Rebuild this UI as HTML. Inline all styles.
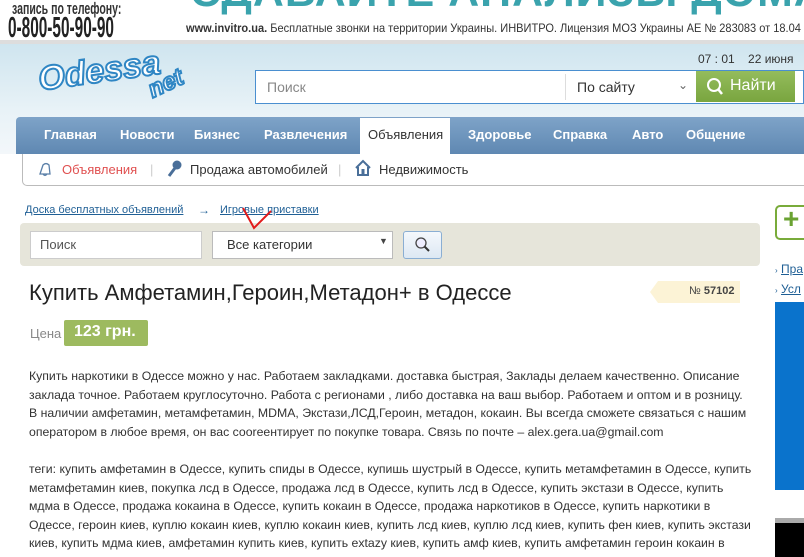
<!DOCTYPE html>
<html><head><meta charset="utf-8"><style>
*{margin:0;padding:0;box-sizing:border-box}
html,body{width:804px;height:557px;overflow:hidden}
body{background:#fff;font-family:"Liberation Sans",sans-serif;position:relative;color:#333}
.a{position:absolute;white-space:nowrap}
.n{transform-origin:0 0}
</style></head><body>
<!-- banner -->
<div class="a" style="left:0;top:0;width:804px;height:44px;background:#fff;border-bottom:4px solid #ddd;overflow:hidden">
<div class="a n" style="left:190px;top:-32px;font-size:42px;font-weight:bold;color:#3aa3ad;letter-spacing:1px;transform:scaleX(1.02)">СДАВАЙТЕ АНАЛИЗЫ ДОМА</div>
</div>
<div class="a n" style="left:12px;top:-1px;font-size:17px;font-weight:bold;color:#333;transform:scaleX(0.62)">запись по телефону:</div>
<div class="a n" style="left:8px;top:12px;font-size:29px;font-weight:bold;color:#222;transform:scaleX(0.53)">0-800-50-90-90</div>
<div class="a n" style="left:186px;top:21px;font-size:12px;color:#333;transform:scaleX(0.92)"><b>www.invitro.ua.</b> Бесплатные звонки на территории Украины. ИНВИТРО. Лицензия МОЗ Украины АЕ № 283083 от 18.04</div>
<!-- header -->
<div class="a" style="left:0;top:44px;width:804px;height:110px;background:linear-gradient(180deg,#cfe5ef,#e8f2f7 60%,#f3f7fa)"></div>
<div class="a" style="left:38px;top:52px;font-size:34px;font-weight:bold;font-style:italic;color:#fff;-webkit-text-stroke:2px #2f86c4;transform:rotate(-8deg)">Odessa</div>
<div class="a" style="left:148px;top:70px;font-size:24px;font-weight:bold;font-style:italic;color:#fff;-webkit-text-stroke:2px #2f86c4;transform:rotate(-25deg)">net</div>
<div class="a" style="left:698px;top:52px;font-size:12px;color:#333">07 : 01 &nbsp;&nbsp;&nbsp;22 июня</div>
<div class="a" style="left:255px;top:70px;width:549px;height:34px;background:#fff;border:1px solid #4a8fd0"></div>
<div class="a" style="left:267px;top:79px;font-size:14px;color:#888">Поиск</div>
<div class="a" style="left:565px;top:74px;width:1px;height:26px;background:#ddd"></div>
<div class="a" style="left:577px;top:79px;font-size:14px;color:#333">По сайту</div>
<div class="a" style="left:678px;top:78px;font-size:12px;color:#666">⌄</div>
<div class="a" style="left:696px;top:71px;width:99px;height:31px;background:linear-gradient(#94bc5c,#79a53f)"></div>
<svg class="a" style="left:706px;top:77px" width="18" height="20"><circle cx="8" cy="8" r="6" fill="none" stroke="#fff" stroke-width="2"/><line x1="12" y1="12" x2="16" y2="17" stroke="#fff" stroke-width="2.5"/></svg>
<div class="a" style="left:730px;top:77px;font-size:16px;color:#fff">Найти</div>
<!-- nav -->
<div class="a" style="left:16px;top:117px;width:788px;height:37px;background:linear-gradient(#7ea3c8,#5f88b2);border-radius:4px 0 0 0"></div>
<div class="a" style="left:360px;top:118px;width:90px;height:36px;background:#fff"></div>
<div class="a" style="top:127px;left:0;font-size:13px;color:#fff;font-weight:bold;text-decoration:underline">
<span class="a" style="left:44px">Главная</span><span class="a" style="left:120px">Новости</span><span class="a" style="left:194px">Бизнес</span><span class="a" style="left:264px">Развлечения</span><span class="a" style="left:368px;color:#333;font-weight:normal">Объявления</span><span class="a" style="left:468px">Здоровье</span><span class="a" style="left:553px">Справка</span><span class="a" style="left:632px">Авто</span><span class="a" style="left:686px">Общение</span></div>
<div class="a" style="left:22px;top:154px;width:782px;height:32px;background:#fff;border:1px solid #bbb;border-top:none;border-right:none;border-radius:0 0 0 5px"></div>
<svg class="a" style="left:37px;top:161px" width="16" height="16"><path d="M3 13 L6 4 Q9 1 12 4 L13 13 Z M6 13 Q8 16 10 13" fill="none" stroke="#5a7fa8" stroke-width="1.3"/></svg>
<div class="a" style="left:62px;top:162px;font-size:13px;color:#e05050">Объявления</div>
<div class="a" style="left:150px;top:162px;font-size:13px;color:#ccc">|</div>
<svg class="a" style="left:166px;top:160px" width="16" height="18"><circle cx="11" cy="5" r="4.5" fill="#4a6f99"/><line x1="9" y1="8" x2="3" y2="16" stroke="#4a6f99" stroke-width="3"/></svg>
<div class="a" style="left:190px;top:162px;font-size:13px;color:#333">Продажа автомобилей</div>
<div class="a" style="left:338px;top:162px;font-size:13px;color:#ccc">|</div>
<svg class="a" style="left:354px;top:159px" width="18" height="18"><path d="M2 9 L9 2 L16 9 M4 8 V16 H14 V8" fill="none" stroke="#4a6f99" stroke-width="2"/><rect x="7.5" y="10" width="3" height="6" fill="#4a6f99"/></svg>
<div class="a" style="left:379px;top:162px;font-size:13px;color:#333">Недвижимость</div>
<!-- breadcrumb -->
<div class="a" style="left:25px;top:204px;font-size:11px;color:#1f5f95;text-decoration:underline">Доска бесплатных объявлений</div>
<div class="a" style="left:198px;top:203px;font-size:12px;color:#1f5f95">→</div>
<div class="a" style="left:220px;top:204px;font-size:11px;color:#1f5f95;text-decoration:underline">Игровые приставки</div>
<div class="a" style="left:20px;top:223px;width:740px;height:43px;background:#e6e5da;border-radius:4px"></div>
<div class="a" style="left:30px;top:231px;width:172px;height:28px;background:#fff;border:1px solid #ccc"></div>
<div class="a" style="left:40px;top:237px;font-size:13px;color:#555">Поиск</div>
<div class="a" style="left:212px;top:231px;width:181px;height:28px;background:#fff;border:1px solid #bbb"></div>
<div class="a" style="left:227px;top:237px;font-size:13px;color:#333">Все категории</div>
<div class="a" style="left:379px;top:236px;font-size:9px;color:#444">▼</div>
<div class="a" style="left:403px;top:231px;width:39px;height:28px;background:linear-gradient(#f4f8fc,#dde8f3);border:1px solid #8aaed3;border-radius:3px"></div>
<svg class="a" style="left:414px;top:236px" width="18" height="18"><circle cx="7" cy="7" r="5" fill="#eef" stroke="#444" stroke-width="1.3"/><line x1="10.5" y1="10.5" x2="15" y2="15" stroke="#333" stroke-width="2"/></svg>
<svg class="a" style="left:240px;top:205px" width="35" height="25"><path d="M3 3 L14 23 L31 6" fill="none" stroke="#e21b1b" stroke-width="2"/></svg>
<!-- title -->
<div class="a" style="left:29px;top:280px;font-size:22px;color:#222">Купить Амфетамин,Героин,Метадон+ в Одессе</div>
<div class="a" style="left:650px;top:281px;width:90px;height:22px;background:#fcf3d6;clip-path:polygon(8px 0,100% 0,100% 100%,8px 100%,0 50%)"></div>
<div class="a" style="left:689px;top:285px;font-size:11px;color:#444">№ <b>57102</b></div>
<div class="a" style="left:30px;top:326px;font-size:13px;color:#888">Цена</div>
<div class="a" style="left:64px;top:320px;width:84px;height:26px;background:#9dba5f;border-radius:2px"></div>
<div class="a" style="left:74px;top:323px;font-size:16px;font-weight:bold;color:#fff">123 грн.</div>
<div class="a n" style="left:29px;top:367px;font-size:12.4px;line-height:18.6px;color:#333;transform:scaleX(0.99)">Купить наркотики в Одессе можно у нас. Работаем закладками. доставка быстрая, Заклады делаем качественно. Описание<br>заклада точное. Работаем круглосуточно. Работа с регионами , либо доставка на ваш выбор. Работаем и оптом и в розницу.<br>В наличии амфетамин, метамфетамин, MDMA, Экстази,ЛСД,Героин, метадон, кокаин. Вы всегда сможете связаться с нашим<br>оператором в любое время, он вас сооreентирует по покупке товара. Связь по почте – alex.gera.ua@gmail.com<br><br>теги: купить амфетамин в Одессе, купить спиды в Одессе, купишь шустрый в Одессе, купить метамфетамин в Одессе, купить<br>метамфетамин киев, покупка лсд в Одессе, продажа лсд в Одессе, купить лсд в Одессе, купить экстази в Одессе, купить<br>мдма в Одессе, продажа кокаина в Одессе, купить кокаин в Одессе, продажа наркотиков в Одессе, купить наркотики в<br>Одессе, героин киев, куплю кокаин киев, куплю кокаин киев, купить лсд киев, куплю лсд киев, купить фен киев, купить экстази<br>киев, купить мдма киев, амфетамин купить киев, купить extazy киев, купить амф киев, купить амфетамин героин кокаин в<br>Одессе, купить метамфетамин киев, купить кокаин киев, купить кокаин в Одессе, купить кокаин</div>
<!-- right column -->
<div class="a" style="left:775px;top:205px;width:29px;height:35px;border:2px solid #79ab3a;border-right:none;border-radius:5px 0 0 5px;background:#fff"></div>
<div class="a" style="left:783px;top:203px;font-size:28px;font-weight:bold;color:#6aa232">+</div>
<div class="a" style="left:775px;top:262px;font-size:12px;color:#1f5f95"><span style="font-size:8px">›</span> <u>Пра</u></div>
<div class="a" style="left:775px;top:282px;font-size:12px;color:#1f5f95"><span style="font-size:8px">›</span> <u>Усл</u></div>
<div class="a" style="left:775px;top:302px;width:29px;height:188px;background:#0a73cc"></div>
<div class="a" style="left:775px;top:518px;width:29px;height:39px;background:#000;border-top:5px solid #aaa"></div>
</body></html>
